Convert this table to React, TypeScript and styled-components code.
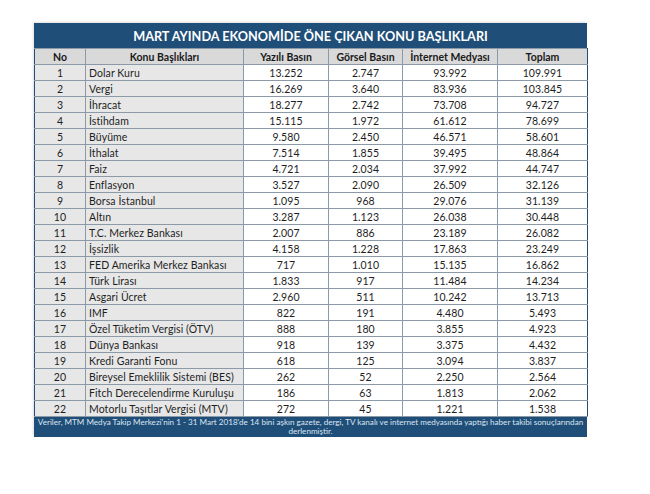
import React from "react";
import styled, { createGlobalStyle } from "styled-components";

const Global = createGlobalStyle`
  html, body { margin: 0; padding: 0; background: #ffffff; }
  body { font-family: Lato, "Open Sans", sans-serif; }
`;

const Page = styled.div`
  width: 650px;
  height: 494px;
  padding: 23px 0 0 34px;
  box-sizing: border-box;
`;

const Card = styled.div`
  width: 553px;
  background: #1f4e79;
  box-shadow: -1px -1px 2px rgba(0,0,0,0.12);
`;

const Title = styled.div`
  height: 25px;
  display: flex;
  align-items: center;
  justify-content: center;
  color: #ffffff;
  font-weight: 700;
  font-size: 12.7px;
`;

const Table = styled.table`
  width: 553px;
  border-collapse: collapse;
  table-layout: fixed;
  background: #ffffff;
`;

const Th = styled.th<{ $w: number }>`
  width: ${(p) => p.$w}px;
  height: 16px;
  padding: 0;
  box-sizing: border-box;
  background: #d9d9d9;
  border: 1px solid #8c9aa8;
  font-size: 10.5px;
  font-weight: 700;
  color: #1a1a1a;
  text-align: center;
  line-height: 14px;
  &:first-child { border-left-color: #1f4e79; }
  &:last-child { border-right-color: #1f4e79; }
`;

const Td = styled.td<{ $shade?: boolean; $left?: boolean }>`
  height: 16px;
  padding: 0 ${(p) => (p.$left ? "3px" : "0")};
  box-sizing: border-box;
  background: ${(p) => (p.$shade ? "#e7e7e7" : "#ffffff")};
  border: 1px solid #8c9aa8;
  font-size: 10.5px;
  letter-spacing: 0.08px;
  color: #1e1e1e;
  text-align: ${(p) => (p.$left ? "left" : "center")};
  line-height: 14px;
  white-space: nowrap;
  overflow: hidden;
  &:first-child { border-left-color: #1f4e79; }
  &:last-child { border-right-color: #1f4e79; }
`;

const Footer = styled.div`
  height: 20px;
  padding: 0 1px;
  box-sizing: border-box;
  color: #dbe5f0;
  font-size: 8.1px;
  line-height: 9.5px;
  text-align: center;
  display: flex;
  flex-direction: column;
  align-items: center;
  justify-content: center;
  white-space: nowrap;
`;

const rows: [string, string, string, string, string][] = [
  ["Dolar Kuru", "13.252", "2.747", "93.992", "109.991"],
  ["Vergi", "16.269", "3.640", "83.936", "103.845"],
  ["İhracat", "18.277", "2.742", "73.708", "94.727"],
  ["İstihdam", "15.115", "1.972", "61.612", "78.699"],
  ["Büyüme", "9.580", "2.450", "46.571", "58.601"],
  ["İthalat", "7.514", "1.855", "39.495", "48.864"],
  ["Faiz", "4.721", "2.034", "37.992", "44.747"],
  ["Enflasyon", "3.527", "2.090", "26.509", "32.126"],
  ["Borsa İstanbul", "1.095", "968", "29.076", "31.139"],
  ["Altın", "3.287", "1.123", "26.038", "30.448"],
  ["T.C. Merkez Bankası", "2.007", "886", "23.189", "26.082"],
  ["İşsizlik", "4.158", "1.228", "17.863", "23.249"],
  ["FED Amerika Merkez Bankası", "717", "1.010", "15.135", "16.862"],
  ["Türk Lirası", "1.833", "917", "11.484", "14.234"],
  ["Asgari Ücret", "2.960", "511", "10.242", "13.713"],
  ["IMF", "822", "191", "4.480", "5.493"],
  ["Özel Tüketim Vergisi (ÖTV)", "888", "180", "3.855", "4.923"],
  ["Dünya Bankası", "918", "139", "3.375", "4.432"],
  ["Kredi Garanti Fonu", "618", "125", "3.094", "3.837"],
  ["Bireysel Emeklilik Sistemi (BES)", "262", "52", "2.250", "2.564"],
  ["Fitch Derecelendirme Kuruluşu", "186", "63", "1.813", "2.062"],
  ["Motorlu Taşıtlar Vergisi (MTV)", "272", "45", "1.221", "1.538"],
];

const cols: [string, number][] = [
  ["No", 51],
  ["Konu Başlıkları", 158],
  ["Yazılı Basın", 85],
  ["Görsel Basın", 74],
  ["İnternet Medyası", 95],
  ["Toplam", 90],
];

export default function App() {
  return (
    <Page>
      <Global />
      <Card>
        <Title>MART AYINDA EKONOMİDE ÖNE ÇIKAN KONU BAŞLIKLARI</Title>
        <Table>
          <thead>
            <tr>
              {cols.map(([c, w]) => (
                <Th key={c} $w={w}>{c}</Th>
              ))}
            </tr>
          </thead>
          <tbody>
            {rows.map((r, i) => (
              <tr key={i}>
                <Td $shade>{i + 1}</Td>
                <Td $shade $left>{r[0]}</Td>
                <Td>{r[1]}</Td>
                <Td>{r[2]}</Td>
                <Td>{r[3]}</Td>
                <Td>{r[4]}</Td>
              </tr>
            ))}
          </tbody>
        </Table>
        <Footer>
          <span>Veriler, MTM Medya Takip Merkezi'nin 1 - 31 Mart 2018'de 14 bini aşkın gazete, dergi, TV kanalı ve internet medyasında yaptığı haber takibi sonuçlarından</span>
          <span>derlenmiştir.</span>
        </Footer>
      </Card>
    </Page>
  );
}
